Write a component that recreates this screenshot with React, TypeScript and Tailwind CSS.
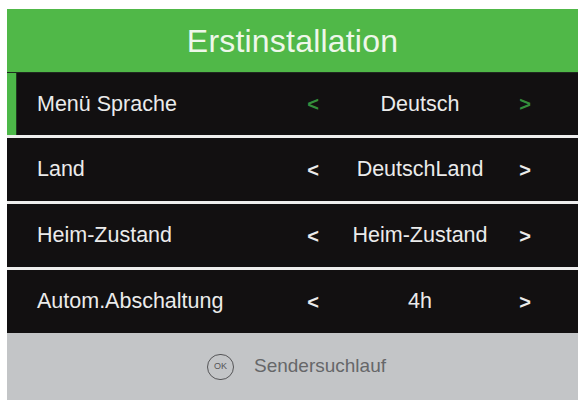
import React from "react";

type Row = { label: string; value: string; active?: boolean };

const rows: Row[] = [
  { label: "Menü Sprache", value: "Deutsch", active: true },
  { label: "Land", value: "DeutschLand" },
  { label: "Heim-Zustand", value: "Heim-Zustand" },
  { label: "Autom.Abschaltung", value: "4h" },
];

// Erstinstallation-Menü (TV-Bildschirm)
export default function App() {
  return (
    <div
      className="w-[584px] h-[407px] bg-white pt-[9px] pl-[7px] pr-[6px] overflow-hidden"
      style={{ fontFamily: '"Liberation Sans", Arial, sans-serif' }}
    >
      <div className="flex flex-col">
        <div className="h-[63px] bg-[#50b848] flex items-center justify-center">
          <span className="text-[32px] leading-none text-[#eef7ea] tracking-[0.2px]">
            Erstinstallation
          </span>
        </div>

        {rows.map((r, i) => (
          <div
            key={r.label}
            className={
              "relative h-[63px] bg-[#121011] flex items-center text-[21.5px] text-[#ebebeb] " +
              (i > 0 ? "border-t-[3px] border-[#eeeeee] h-[66px]" : "border-t border-[#1f2a1f]")
            }
          >
            {r.active && (
              <div className="absolute left-0 top-0 bottom-0 w-[10px] bg-[#4cb848] border-r border-[#1f3a1f]" />
            )}
            <div className="w-[292px] pl-[30px]">{r.label}</div>
            <div
              className={
                "w-[28px] text-center font-bold text-[20px] " +
                (r.active ? "text-[#348f3c]" : "")
              }
            >
              &lt;
            </div>
            <div className="w-[186px] text-center">{r.value}</div>
            <div
              className={
                "w-[24px] text-center font-bold text-[20px] " +
                (r.active ? "text-[#348f3c]" : "")
              }
            >
              &gt;
            </div>
          </div>
        ))}

        <div className="h-[67px] bg-[#c3c5c7] flex items-center justify-center gap-[20px] pl-[8px]">
          <div className="w-[27px] h-[26px] rounded-full border-[1.5px] border-[#555557] flex items-center justify-center text-[9px] text-[#555557]">
            OK
          </div>
          <span className="text-[19px] text-[#666769]">Sendersuchlauf</span>
        </div>
      </div>
    </div>
  );
}
